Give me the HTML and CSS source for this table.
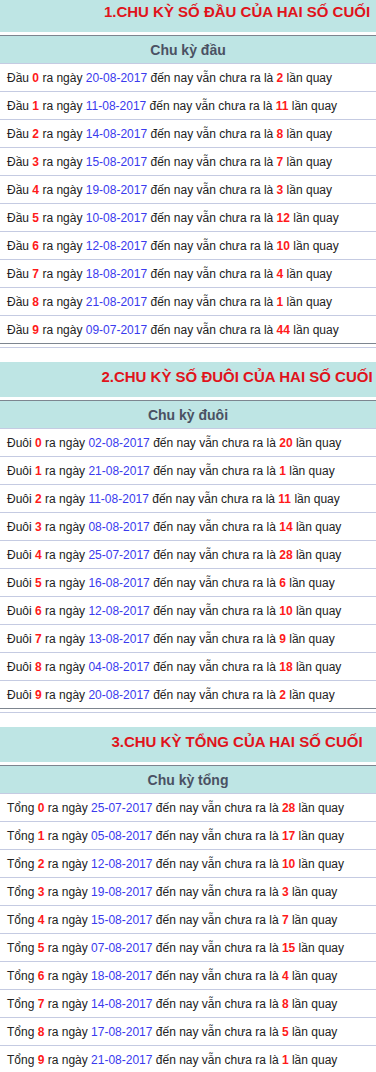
FILE: index.html
```html
<!DOCTYPE html>
<html lang="vi">
<head>
<meta charset="utf-8">
<link rel="stylesheet" href="styles.css">
</head>
<body>
<div class="page">
  <section class="section first">
    <h2 class="title">1.CHU KỲ SỐ ĐẦU CỦA HAI SỐ CUỐI</h2>
    <div class="table">
      <div class="head">Chu kỳ đầu</div>
      <div class="row">Đầu <b class="num">0</b> ra ngày <span class="date">20-08-2017</span> đến nay vẫn chưa ra là <b class="num">2</b> lần quay</div>
      <div class="row">Đầu <b class="num">1</b> ra ngày <span class="date">11-08-2017</span> đến nay vẫn chưa ra là <b class="num">11</b> lần quay</div>
      <div class="row">Đầu <b class="num">2</b> ra ngày <span class="date">14-08-2017</span> đến nay vẫn chưa ra là <b class="num">8</b> lần quay</div>
      <div class="row">Đầu <b class="num">3</b> ra ngày <span class="date">15-08-2017</span> đến nay vẫn chưa ra là <b class="num">7</b> lần quay</div>
      <div class="row">Đầu <b class="num">4</b> ra ngày <span class="date">19-08-2017</span> đến nay vẫn chưa ra là <b class="num">3</b> lần quay</div>
      <div class="row">Đầu <b class="num">5</b> ra ngày <span class="date">10-08-2017</span> đến nay vẫn chưa ra là <b class="num">12</b> lần quay</div>
      <div class="row">Đầu <b class="num">6</b> ra ngày <span class="date">12-08-2017</span> đến nay vẫn chưa ra là <b class="num">10</b> lần quay</div>
      <div class="row">Đầu <b class="num">7</b> ra ngày <span class="date">18-08-2017</span> đến nay vẫn chưa ra là <b class="num">4</b> lần quay</div>
      <div class="row">Đầu <b class="num">8</b> ra ngày <span class="date">21-08-2017</span> đến nay vẫn chưa ra là <b class="num">1</b> lần quay</div>
      <div class="row">Đầu <b class="num">9</b> ra ngày <span class="date">09-07-2017</span> đến nay vẫn chưa ra là <b class="num">44</b> lần quay</div>
    </div>
    <div class="sep"></div>
  </section>

  <section class="section">
    <h2 class="title">2.CHU KỲ SỐ ĐUÔI CỦA HAI SỐ CUỐI</h2>
    <div class="table">
      <div class="head">Chu kỳ đuôi</div>
      <div class="row">Đuôi <b class="num">0</b> ra ngày <span class="date">02-08-2017</span> đến nay vẫn chưa ra là <b class="num">20</b> lần quay</div>
      <div class="row">Đuôi <b class="num">1</b> ra ngày <span class="date">21-08-2017</span> đến nay vẫn chưa ra là <b class="num">1</b> lần quay</div>
      <div class="row">Đuôi <b class="num">2</b> ra ngày <span class="date">11-08-2017</span> đến nay vẫn chưa ra là <b class="num">11</b> lần quay</div>
      <div class="row">Đuôi <b class="num">3</b> ra ngày <span class="date">08-08-2017</span> đến nay vẫn chưa ra là <b class="num">14</b> lần quay</div>
      <div class="row">Đuôi <b class="num">4</b> ra ngày <span class="date">25-07-2017</span> đến nay vẫn chưa ra là <b class="num">28</b> lần quay</div>
      <div class="row">Đuôi <b class="num">5</b> ra ngày <span class="date">16-08-2017</span> đến nay vẫn chưa ra là <b class="num">6</b> lần quay</div>
      <div class="row">Đuôi <b class="num">6</b> ra ngày <span class="date">12-08-2017</span> đến nay vẫn chưa ra là <b class="num">10</b> lần quay</div>
      <div class="row">Đuôi <b class="num">7</b> ra ngày <span class="date">13-08-2017</span> đến nay vẫn chưa ra là <b class="num">9</b> lần quay</div>
      <div class="row">Đuôi <b class="num">8</b> ra ngày <span class="date">04-08-2017</span> đến nay vẫn chưa ra là <b class="num">18</b> lần quay</div>
      <div class="row">Đuôi <b class="num">9</b> ra ngày <span class="date">20-08-2017</span> đến nay vẫn chưa ra là <b class="num">2</b> lần quay</div>
    </div>
    <div class="sep"></div>
  </section>

  <section class="section">
    <h2 class="title">3.CHU KỲ TỔNG CỦA HAI SỐ CUỐI</h2>
    <div class="table">
      <div class="head">Chu kỳ tổng</div>
      <div class="row">Tổng <b class="num">0</b> ra ngày <span class="date">25-07-2017</span> đến nay vẫn chưa ra là <b class="num">28</b> lần quay</div>
      <div class="row">Tổng <b class="num">1</b> ra ngày <span class="date">05-08-2017</span> đến nay vẫn chưa ra là <b class="num">17</b> lần quay</div>
      <div class="row">Tổng <b class="num">2</b> ra ngày <span class="date">12-08-2017</span> đến nay vẫn chưa ra là <b class="num">10</b> lần quay</div>
      <div class="row">Tổng <b class="num">3</b> ra ngày <span class="date">19-08-2017</span> đến nay vẫn chưa ra là <b class="num">3</b> lần quay</div>
      <div class="row">Tổng <b class="num">4</b> ra ngày <span class="date">15-08-2017</span> đến nay vẫn chưa ra là <b class="num">7</b> lần quay</div>
      <div class="row">Tổng <b class="num">5</b> ra ngày <span class="date">07-08-2017</span> đến nay vẫn chưa ra là <b class="num">15</b> lần quay</div>
      <div class="row">Tổng <b class="num">6</b> ra ngày <span class="date">18-08-2017</span> đến nay vẫn chưa ra là <b class="num">4</b> lần quay</div>
      <div class="row">Tổng <b class="num">7</b> ra ngày <span class="date">14-08-2017</span> đến nay vẫn chưa ra là <b class="num">8</b> lần quay</div>
      <div class="row">Tổng <b class="num">8</b> ra ngày <span class="date">17-08-2017</span> đến nay vẫn chưa ra là <b class="num">5</b> lần quay</div>
      <div class="row">Tổng <b class="num">9</b> ra ngày <span class="date">21-08-2017</span> đến nay vẫn chưa ra là <b class="num">1</b> lần quay</div>
    </div>
    <div class="sep"></div>
  </section>
</div>
</body>
</html>
```

FILE: styles.css
```css
html, body {
  margin: 0;
  padding: 0;
  background: #ffffff;
}

body {
  font-family: "Liberation Sans", Arial, sans-serif;
  color: #222222;
  overflow: hidden;
}

.page {
  display: flex;
  flex-direction: column;
}

.section {
  display: flex;
  flex-direction: column;
}

.section.first {
  margin-top: -3px;
}

.title {
  margin: 0;
  height: 35px;
  background: #bee5e4;
  color: #e0131b;
  font-size: 15px;
  font-weight: bold;
  display: flex;
  align-items: center;
  justify-content: center;
  padding-left: 98px;
  padding-bottom: 6px;
  box-sizing: border-box;
  white-space: nowrap;
}

.table {
  margin-top: 3px;
  border-top: 1px solid #7d858f;
  display: flex;
  flex-direction: column;
}

.head {
  height: 27px;
  background: #bee5e4;
  border-bottom: 1px solid #c5cbe2;
  color: #4a5163;
  font-size: 14px;
  font-weight: bold;
  display: flex;
  align-items: center;
  justify-content: center;
}

.row {
  height: 27px;
  border-bottom: 1px solid #c5cbe2;
  font-size: 12px;
  display: flex;
  align-items: center;
  padding-left: 7px;
  white-space: pre;
}

.row:last-child {
  border-bottom-color: #7d858f;
}

.num {
  color: #ff1a1a;
  font-weight: bold;
}

.date {
  color: #3a3aee;
}

.sep {
  margin-top: 3px;
  height: 1px;
  background: #c5cbe2;
  margin-bottom: 14px;
}
```
